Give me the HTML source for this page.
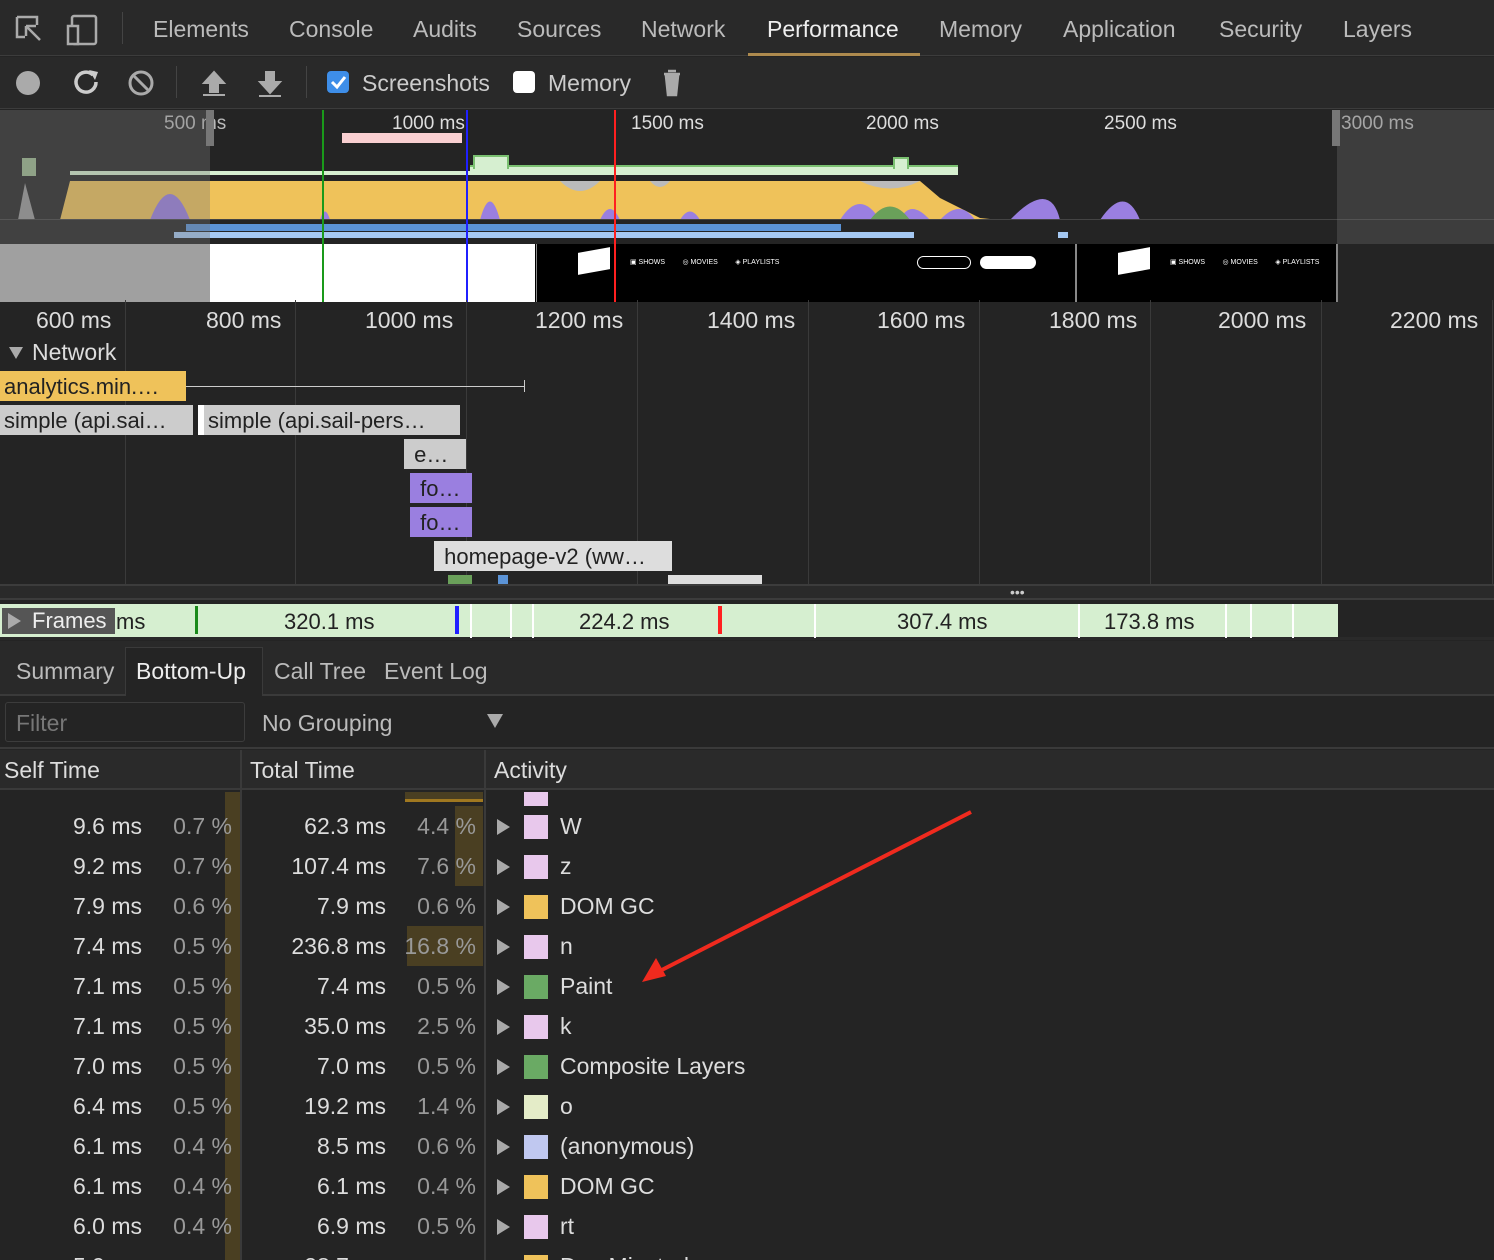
<!DOCTYPE html><html style="overflow:hidden;height:1260px"><head><style>
*{margin:0;padding:0;box-sizing:border-box}
body{width:1494px;height:1260px;background:#242424;font-family:"Liberation Sans",sans-serif;color:#ccc;position:relative;overflow:hidden}
.a{position:absolute}
.t{font-size:23px;color:#bbb;top:16px}
.tick{font-size:19px;color:#bbb}
.row{position:absolute;left:0;width:1494px;height:40px;font-size:23px;color:#ddd}
.row span{position:absolute;top:7px}
.sw{position:absolute;top:9px;left:524px;width:24px;height:24px}
.tri{position:absolute;left:497px;top:13px;width:0;height:0;border-left:13px solid #aaa;border-top:8px solid transparent;border-bottom:8px solid transparent}
.g1{position:absolute;left:225px;top:0;width:15px;height:40px;background:#4a3f22}
.g2{position:absolute;left:455px;top:0;width:28px;height:40px;background:#4a3f22}
.vl{position:absolute;top:300px;width:1px;height:285px;background:#3a3a3a}
.nb{position:absolute;height:30px;font-size:22px;color:#222;padding:3px 4px;white-space:nowrap;overflow:hidden}
</style></head><body>
<div class="a" style="left:0;top:0;width:1494px;height:56px;background:#292929;border-bottom:1px solid #3c3c3c"></div>
<svg class="a" style="left:14px;top:14px" width="90" height="32"><path d="M3 3h20v8M3 3v20h8M12 12l14 14M12 12v10M12 12h10" stroke="#aaa" stroke-width="2.5" fill="none"/><rect x="58" y="2" width="24" height="28" rx="2" stroke="#aaa" stroke-width="2.5" fill="none"/><rect x="54" y="12" width="10" height="18" stroke="#aaa" stroke-width="2.5" fill="#292929"/></svg>
<div class="a" style="left:122px;top:12px;width:1px;height:32px;background:#444"></div>
<div class="a t" style="left:153px">Elements</div><div class="a t" style="left:289px">Console</div><div class="a t" style="left:413px">Audits</div><div class="a t" style="left:517px">Sources</div><div class="a t" style="left:641px">Network</div><div class="a t" style="left:767px;color:#eee">Performance</div><div class="a t" style="left:939px">Memory</div><div class="a t" style="left:1063px">Application</div><div class="a t" style="left:1219px">Security</div><div class="a t" style="left:1343px">Layers</div>
<div class="a" style="left:748px;top:53px;width:172px;height:3px;background:#ad8a4e"></div>
<div class="a" style="left:0;top:57px;width:1494px;height:52px;background:#292929;border-bottom:1px solid #3c3c3c"></div>
<svg class="a" style="left:14px;top:66px" width="680" height="34"><circle cx="14" cy="17" r="12" fill="#aaa"/><path d="M79 9a10 10 0 1 0 3 7" stroke="#ccc" stroke-width="3.5" fill="none"/><path d="M75 4l9 2-3 8z" fill="#ccc"/><circle cx="127" cy="17" r="11" stroke="#aaa" stroke-width="3" fill="none"/><path d="M119 9l16 16" stroke="#aaa" stroke-width="3"/><path d="M200 6l-10 11h6v9h8v-9h6z M189 29h22" stroke="#aaa" stroke-width="2" fill="#aaa"/><path d="M256 27l-10-11h6V6h8v10h6z M245 30h22" stroke="#aaa" stroke-width="2" fill="#aaa"/><rect x="313" y="5" width="22" height="22" rx="4" fill="#3e8ee8"/><path d="M318 16l5 5 8-10" stroke="#fff" stroke-width="3" fill="none"/><rect x="499" y="5" width="22" height="22" rx="4" fill="#fff"/><path d="M650 8h16M654 5h8M652 10l2 19h8l2-19z" stroke="#aaa" stroke-width="2.5" fill="#aaa"/></svg>
<div class="a" style="left:176px;top:66px;width:1px;height:32px;background:#444"></div>
<div class="a" style="left:306px;top:66px;width:1px;height:32px;background:#444"></div>
<div class="a t" style="left:362px;top:70px;color:#ccc">Screenshots</div><div class="a t" style="left:548px;top:70px;color:#ccc">Memory</div>
<div class="a" style="left:0;top:110px;width:1494px;height:192px;background:#242424"></div>
<div class="a tick" style="left:164px;top:113px">500 ms</div><div class="a tick" style="left:392px;top:113px;color:#ddd">1000 ms</div><div class="a tick" style="left:631px;top:113px;color:#ddd">1500 ms</div><div class="a tick" style="left:866px;top:113px;color:#ddd">2000 ms</div><div class="a tick" style="left:1104px;top:113px;color:#ddd">2500 ms</div><div class="a tick" style="left:1341px;top:113px">3000 ms</div>
<div class="a" style="left:342px;top:133px;width:120px;height:10px;background:#f9cfd1"></div>
<div class="a" style="left:470px;top:165px;width:488px;height:10px;background:#d6efd0;border-top:2px solid #7ac070"></div>
<div class="a" style="left:473px;top:155px;width:36px;height:14px;background:#d6efd0;border:2px solid #7ac070;border-bottom:none"></div>
<div class="a" style="left:893px;top:157px;width:16px;height:12px;background:#d6efd0;border:2px solid #7ac070;border-bottom:none"></div>
<div class="a" style="left:70px;top:171px;width:400px;height:4px;background:#d6efd0"></div>
<div class="a" style="left:22px;top:158px;width:14px;height:18px;background:#9bb88f"></div>
<svg class="a" style="left:0;top:178px" width="1494" height="42"><path d="M60 42L70 3 L920 3 L940 20 L960 30 L980 40 L1000 42 Z" fill="#efc25a"/><path d="M650 3q10 12 20 0M560 3q20 20 40 0M860 3q30 15 60 0" fill="#bbb"/><path d="M600 42 Q610 20 620 42M680 42Q690 25 700 42M480 42Q490 5 500 42M840 42Q860 10 880 42M900 42Q910 20 930 42M1010 42Q1050 0 1060 42M1100 42Q1125 5 1140 42M150 42Q170 -10 190 42M940 42Q960 20 975 42M320 42Q325 25 330 42" fill="#9a7fe0"/><path d="M870 42Q890 15 910 42" fill="#6aa05a"/><path d="M18 42L25 5 L35 42Z" fill="#999"/><rect x="0" y="41" width="1494" height="1" fill="#444"/></svg>
<div class="a" style="left:186px;top:224px;width:655px;height:7px;background:#5b93d6"></div>
<div class="a" style="left:174px;top:232px;width:740px;height:6px;background:#a5c8f2"></div>
<div class="a" style="left:1058px;top:232px;width:10px;height:6px;background:#a5c8f2"></div>
<div class="a" style="left:0;top:244px;width:1494px;height:58px;background:#000"></div>
<div class="a" style="left:210px;top:244px;width:325px;height:58px;background:#fff"></div>
<div class="a" style="left:536px;top:244px;width:1px;height:58px;background:#888"></div>
<div class="a" style="left:1075px;top:244px;width:2px;height:58px;background:#888"></div>
<div class="a" style="left:1336px;top:244px;width:2px;height:58px;background:#888"></div>
<div class="a" style="left:0;top:110px;width:210px;height:192px;background:rgba(120,120,120,.35)"></div>
<div class="a" style="left:0;top:244px;width:210px;height:58px;background:#a0a0a0"></div>
<div class="a" style="left:1337px;top:110px;width:157px;height:192px;background:rgba(120,120,120,.3)"></div>
<div class="a" style="left:206px;top:110px;width:8px;height:36px;background:#777"></div>
<div class="a" style="left:1332px;top:110px;width:8px;height:36px;background:#777"></div>
<div class="a" style="left:980px;top:256px;width:56px;height:13px;background:#fff;border-radius:7px"></div>
<div class="a" style="left:917px;top:256px;width:54px;height:13px;border:1px solid #fff;border-radius:7px"></div>
<div class="a" style="left:578px;top:250px;width:32px;height:22px;background:#fff;transform:skewY(-10deg)"></div>
<div class="a" style="left:1118px;top:250px;width:32px;height:22px;background:#fff;transform:skewY(-10deg)"></div>
<div class="a" style="left:630px;top:258px;font-size:7px;color:#fff">▣ SHOWS &nbsp; &nbsp; &nbsp; &nbsp; ◎ MOVIES &nbsp; &nbsp; &nbsp; &nbsp; ◈ PLAYLISTS</div>
<div class="a" style="left:1170px;top:258px;font-size:7px;color:#fff">▣ SHOWS &nbsp; &nbsp; &nbsp; &nbsp; ◎ MOVIES &nbsp; &nbsp; &nbsp; &nbsp; ◈ PLAYLISTS</div>
<div class="a" style="left:322px;top:110px;width:2px;height:192px;background:#1a9a1a"></div>
<div class="a" style="left:466px;top:110px;width:2px;height:192px;background:#2020ff"></div>
<div class="a" style="left:614px;top:110px;width:2px;height:192px;background:#ff2020"></div>
<div class="a" style="left:0;top:303px;width:1494px;height:282px;background:#242424"></div>
<div class="vl" style="left:125px"></div><div class="vl" style="left:295px"></div><div class="vl" style="left:466px"></div><div class="vl" style="left:637px"></div><div class="vl" style="left:808px"></div><div class="vl" style="left:979px"></div><div class="vl" style="left:1150px"></div><div class="vl" style="left:1321px"></div><div class="vl" style="left:1492px"></div>
<div class="a" style="top:307px;font-size:23px;color:#ddd;left:36px">600 ms</div><div class="a" style="top:307px;font-size:23px;color:#ddd;left:206px">800 ms</div><div class="a" style="top:307px;font-size:23px;color:#ddd;left:365px">1000 ms</div><div class="a" style="top:307px;font-size:23px;color:#ddd;left:535px">1200 ms</div><div class="a" style="top:307px;font-size:23px;color:#ddd;left:707px">1400 ms</div><div class="a" style="top:307px;font-size:23px;color:#ddd;left:877px">1600 ms</div><div class="a" style="top:307px;font-size:23px;color:#ddd;left:1049px">1800 ms</div><div class="a" style="top:307px;font-size:23px;color:#ddd;left:1218px">2000 ms</div><div class="a" style="top:307px;font-size:23px;color:#ddd;left:1390px">2200 ms</div>
<div class="a" style="left:9px;top:347px;border-top:12px solid #aaa;border-left:7px solid transparent;border-right:7px solid transparent"></div>
<div class="a" style="left:32px;top:339px;font-size:23px;color:#ddd">Network</div>
<div class="nb" style="left:0;top:371px;width:186px;background:#efc25a">analytics.min.…</div>
<div class="a" style="left:186px;top:386px;width:338px;height:1px;background:#ccc"></div><div class="a" style="left:524px;top:380px;width:1px;height:12px;background:#ccc"></div>
<div class="nb" style="left:0;top:405px;width:193px;background:#ccc">simple (api.sai…</div>
<div class="nb" style="left:198px;top:405px;width:262px;background:#ccc;border-left:6px solid #fff">simple (api.sail-pers…</div>
<div class="nb" style="left:404px;top:439px;width:62px;background:#ccc">&nbsp;e…</div>
<div class="nb" style="left:410px;top:473px;width:62px;background:#9a7fe0">&nbsp;fo…</div>
<div class="nb" style="left:410px;top:507px;width:62px;background:#9a7fe0">&nbsp;fo…</div>
<div class="nb" style="left:434px;top:541px;width:238px;background:#ddd">&nbsp;homepage-v2 (ww…</div>
<div class="a" style="left:448px;top:575px;width:24px;height:9px;background:#6aa05a"></div><div class="a" style="left:498px;top:575px;width:10px;height:9px;background:#5b93d6"></div><div class="a" style="left:668px;top:575px;width:94px;height:9px;background:#ddd"></div>
<div class="a" style="left:0;top:584px;width:1494px;height:16px;background:#2a2a2a;border-top:2px solid #3c3c3c;border-bottom:2px solid #3c3c3c"></div>
<div class="a" style="left:1010px;top:584px;font-size:14px;color:#ccc">•••</div>
<div class="a" style="left:0;top:604px;width:1338px;height:34px;background:#d6efd0"></div>
<div class="a" style="left:0;top:637px;width:1494px;height:3px;background:#2a2a2a"></div>
<div class="a" style="left:195px;top:606px;width:3px;height:28px;background:#1a8a1a"></div>
<div class="a" style="left:455px;top:606px;width:4px;height:28px;background:#2020ff"></div>
<div class="a" style="left:718px;top:606px;width:4px;height:28px;background:#ff2020"></div>
<div class="a" style="left:470px;top:604px;width:2px;height:34px;background:#fff"></div><div class="a" style="left:510px;top:604px;width:2px;height:34px;background:#fff"></div><div class="a" style="left:532px;top:604px;width:2px;height:34px;background:#fff"></div><div class="a" style="left:814px;top:604px;width:2px;height:34px;background:#fff"></div><div class="a" style="left:1078px;top:604px;width:2px;height:34px;background:#fff"></div><div class="a" style="left:1225px;top:604px;width:2px;height:34px;background:#fff"></div><div class="a" style="left:1250px;top:604px;width:2px;height:34px;background:#fff"></div><div class="a" style="left:1292px;top:604px;width:2px;height:34px;background:#fff"></div>
<div class="a" style="top:609px;font-size:22px;color:#222;left:116px">ms</div><div class="a" style="top:609px;font-size:22px;color:#222;left:284px">320.1 ms</div><div class="a" style="top:609px;font-size:22px;color:#222;left:579px">224.2 ms</div><div class="a" style="top:609px;font-size:22px;color:#222;left:897px">307.4 ms</div><div class="a" style="top:609px;font-size:22px;color:#222;left:1104px">173.8 ms</div>
<div class="a" style="left:2px;top:608px;width:113px;height:26px;background:#555"></div>
<div class="a" style="left:8px;top:613px;border-left:13px solid #aaa;border-top:8px solid transparent;border-bottom:8px solid transparent"></div>
<div class="a" style="left:32px;top:608px;font-size:22px;color:#eee">Frames</div>
<div class="a" style="left:0;top:641px;width:1494px;height:55px;background:#292929;border-bottom:2px solid #3a3a3a"></div>
<div class="a" style="left:125px;top:647px;width:138px;height:49px;background:#242424;border:1px solid #3a3a3a;border-bottom:none"></div>
<div class="a t" style="top:658px;left:16px">Summary</div><div class="a t" style="top:658px;left:136px;color:#eee">Bottom-Up</div><div class="a t" style="top:658px;left:274px">Call Tree</div><div class="a t" style="top:658px;left:384px">Event Log</div>
<div class="a" style="left:0;top:697px;width:1494px;height:52px;background:#242424;border-bottom:2px solid #3a3a3a"></div>
<div class="a" style="left:5px;top:702px;width:240px;height:40px;border:1px solid #3c3c3c;border-radius:3px"></div>
<div class="a t" style="top:710px;left:16px;color:#777">Filter</div>
<div class="a t" style="top:710px;left:262px">No Grouping</div>
<div class="a" style="left:487px;top:714px;border-top:14px solid #aaa;border-left:8px solid transparent;border-right:8px solid transparent"></div>
<div class="a" style="left:0;top:750px;width:1494px;height:40px;background:#2a2a2a;border-bottom:2px solid #3a3a3a"></div>
<div class="a t" style="top:757px;left:4px;color:#ddd">Self Time</div><div class="a t" style="top:757px;left:250px;color:#ddd">Total Time</div><div class="a t" style="top:757px;left:494px;color:#ddd">Activity</div>
<div class="a" style="left:240px;top:750px;width:2px;height:510px;background:#3a3a3a"></div>
<div class="a" style="left:484px;top:750px;width:2px;height:510px;background:#3a3a3a"></div>
<div class="row" style="top:792px;height:14px;overflow:hidden"><div class="g1" style="height:14px"></div><div class="a" style="left:405px;top:0;width:78px;height:10px;background:#4a3f22;border-bottom:3px solid #a07820"></div><div class="sw" style="top:-4px;background:#e8c8ec"></div></div>
<div class="row" style="top:806px"><div class="g1"></div><div class="g2"></div><span style="right:1352px">9.6 ms</span><span style="right:1262px;color:#999">0.7 %</span><span style="right:1108px">62.3 ms</span><span style="right:1018px;color:#999">4.4 %</span><div class="tri"></div><div class="sw" style="background:#e8c8ec"></div><span style="left:560px">W</span></div>
<div class="row" style="top:846px"><div class="g1"></div><div class="g2"></div><span style="right:1352px">9.2 ms</span><span style="right:1262px;color:#999">0.7 %</span><span style="right:1108px">107.4 ms</span><span style="right:1018px;color:#999">7.6 %</span><div class="tri"></div><div class="sw" style="background:#e8c8ec"></div><span style="left:560px">z</span></div>
<div class="row" style="top:886px"><div class="g1"></div><span style="right:1352px">7.9 ms</span><span style="right:1262px;color:#999">0.6 %</span><span style="right:1108px">7.9 ms</span><span style="right:1018px;color:#999">0.6 %</span><div class="tri"></div><div class="sw" style="background:#efc25a"></div><span style="left:560px">DOM GC</span></div>
<div class="row" style="top:926px"><div class="g1"></div><div class="g2" style="left:407px;width:76px"></div><span style="right:1352px">7.4 ms</span><span style="right:1262px;color:#999">0.5 %</span><span style="right:1108px">236.8 ms</span><span style="right:1018px;color:#999">16.8 %</span><div class="tri"></div><div class="sw" style="background:#e8c8ec"></div><span style="left:560px">n</span></div>
<div class="row" style="top:966px"><div class="g1"></div><span style="right:1352px">7.1 ms</span><span style="right:1262px;color:#999">0.5 %</span><span style="right:1108px">7.4 ms</span><span style="right:1018px;color:#999">0.5 %</span><div class="tri"></div><div class="sw" style="background:#6aaa64"></div><span style="left:560px">Paint</span></div>
<div class="row" style="top:1006px"><div class="g1"></div><span style="right:1352px">7.1 ms</span><span style="right:1262px;color:#999">0.5 %</span><span style="right:1108px">35.0 ms</span><span style="right:1018px;color:#999">2.5 %</span><div class="tri"></div><div class="sw" style="background:#e8c8ec"></div><span style="left:560px">k</span></div>
<div class="row" style="top:1046px"><div class="g1"></div><span style="right:1352px">7.0 ms</span><span style="right:1262px;color:#999">0.5 %</span><span style="right:1108px">7.0 ms</span><span style="right:1018px;color:#999">0.5 %</span><div class="tri"></div><div class="sw" style="background:#6aaa64"></div><span style="left:560px">Composite Layers</span></div>
<div class="row" style="top:1086px"><div class="g1"></div><span style="right:1352px">6.4 ms</span><span style="right:1262px;color:#999">0.5 %</span><span style="right:1108px">19.2 ms</span><span style="right:1018px;color:#999">1.4 %</span><div class="tri"></div><div class="sw" style="background:#e4ecc8"></div><span style="left:560px">o</span></div>
<div class="row" style="top:1126px"><div class="g1"></div><span style="right:1352px">6.1 ms</span><span style="right:1262px;color:#999">0.4 %</span><span style="right:1108px">8.5 ms</span><span style="right:1018px;color:#999">0.6 %</span><div class="tri"></div><div class="sw" style="background:#c0c8f0"></div><span style="left:560px">(anonymous)</span></div>
<div class="row" style="top:1166px"><div class="g1"></div><span style="right:1352px">6.1 ms</span><span style="right:1262px;color:#999">0.4 %</span><span style="right:1108px">6.1 ms</span><span style="right:1018px;color:#999">0.4 %</span><div class="tri"></div><div class="sw" style="background:#efc25a"></div><span style="left:560px">DOM GC</span></div>
<div class="row" style="top:1206px"><div class="g1"></div><span style="right:1352px">6.0 ms</span><span style="right:1262px;color:#999">0.4 %</span><span style="right:1108px">6.9 ms</span><span style="right:1018px;color:#999">0.5 %</span><div class="tri"></div><div class="sw" style="background:#e8c8ec"></div><span style="left:560px">rt</span></div>
<div class="row" style="top:1246px;height:14px;overflow:hidden"><div class="g1"></div><div class="sw" style="background:#efc25a"></div><span style="right:1352px">5.9 ms</span><span style="right:1108px">28.7 ms</span><span style="left:560px">DomMinsted</span></div>
<svg class="a" style="left:630px;top:800px" width="360" height="190"><path d="M341 12L22 175" stroke="#f02a1e" stroke-width="4"/><path d="M12 182l14-24 10 18z" fill="#f02a1e"/></svg>
</body></html>
